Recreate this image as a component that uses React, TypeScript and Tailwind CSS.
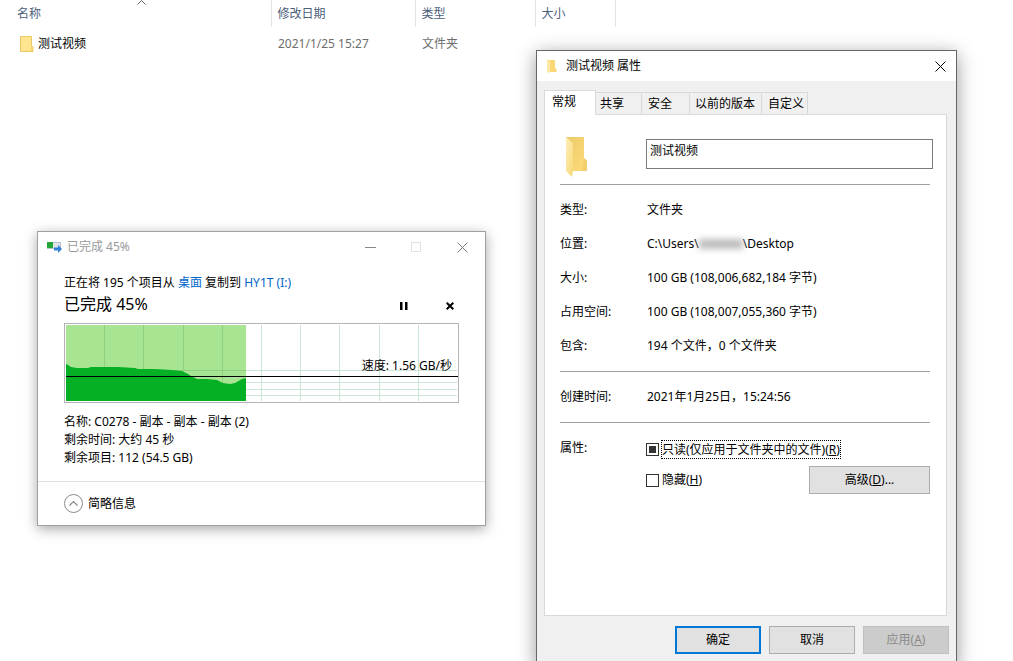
import { useEffect, useRef } from 'react';

const columns = ['修改日期', '类型', '大小'];

const sizeRows = [
  { label: '大小:', value: '100 GB (108,006,682,184 字节)' },
  { label: '占用空间:', value: '100 GB (108,007,055,360 字节)' },
  { label: '包含:', value: '194 个文件，0 个文件夹' },
];

function FileList() {
  return (
    <table className="w-full table-fixed border-collapse text-left">
      <colgroup>
        <col className="w-[271px]" />
        <col className="w-[144px]" />
        <col className="w-[120px]" />
        <col className="w-[80px]" />
        <col />
      </colgroup>
      <thead>
        <tr className="h-[27px] text-[#4c607a]">
          <th className="relative border-r border-[#e2e2e2] pl-[17px] font-normal">
            名称
            <svg className="absolute top-0 left-[137px]" width="9" height="6" viewBox="0 0 9 6" fill="none" stroke="#666">
              <path d="M0.5 4.5 L4.5 0.5 L8.5 4.5" />
            </svg>
          </th>
          {columns.map((name) => (
            <th key={name} className="border-r border-[#e2e2e2] pl-1.5 font-normal">
              {name}
            </th>
          ))}
          <th />
        </tr>
      </thead>
      <tbody>
        <tr className="h-[34px] text-[#6d6d6d]">
          <td className="pl-5">
            <div className="flex items-center gap-1 text-black">
              <svg width="14" height="16" viewBox="0 0 14 16">
                <path d="M0.5 0.5 H11.5 V10 L13 11 V15.5 H0.5 Z" fill="#ffe58f" stroke="#ecc95c" />
                <path d="M11 15 V10.5 L12.5 11.5 V15 Z" fill="#f7d367" />
              </svg>
              测试视频
            </div>
          </td>
          <td className="pl-[7px]">2021/1/25 15:27</td>
          <td className="pl-[7px]">文件夹</td>
          <td />
          <td />
        </tr>
      </tbody>
    </table>
  );
}

function SpeedChart() {
  return (
    <div className="relative h-20">
      <svg className="block h-full w-full" viewBox="0 0 395 80" preserveAspectRatio="none" shapeRendering="crispEdges">
        <rect x="0.5" y="0.5" width="394" height="79" fill="#fff" stroke="#b4b4b4" />
        <rect x="2" y="2" width="180" height="76" fill="#a8e592" />
        {/* Grid */}
        <path d="M40.5 2V78M79.5 2V78M119.5 2V78M158.5 2V78" stroke="#8fd07f" />
        <path d="M197.5 2V78M236.5 2V78M275.5 2V78M315.5 2V78M354.5 2V78" stroke="#cbe6d6" />
        <path d="M182 47.5H393M182 59.5H393M182 66.5H393M182 72.5H393" stroke="#cbe6d6" />
        <path d="M110 47.5H182" stroke="#8fd07f" />
        {/* Transfer speed */}
        <path
          d="M2 41 L4 42 L7 44 L13 45 L24 45 L27 44 L54 44 L71 45 L74 46 L91 46 L108 47 L118 48 L124 51 L127 53 L133 56 L143 56 L153 57 L159 60 L166 61 L171 60 L178 56 L182 55 V78 H2 Z"
          fill="#06b025"
          shapeRendering="auto"
        />
        <path d="M2 53.5H394" stroke="#000" />
      </svg>
      <span className="absolute right-[7px] bottom-7 leading-[18px]">速度: 1.56 GB/秒</span>
    </div>
  );
}

function CopyDialog() {
  return (
    <section className="absolute top-[231px] left-[37px] w-[449px] border border-[#a0a0a0] bg-white shadow-[0_3px_12px_rgba(0,0,0,0.35)]">
      <header className="flex h-[30px] items-center pl-[9px] text-[#999]">
        <svg className="mr-[5px]" width="15" height="12" viewBox="0 0 15 12">
          <rect x="0.5" y="1.5" width="13" height="6" fill="#dfe4e8" stroke="#b9c2ca" />
          <rect x="0" y="1" width="6" height="6" fill="#23a53a" />
          <path d="M7 6.5H11V4L15 8L11 12V9.5H7Z" fill="#3182d4" />
        </svg>
        <span className="flex-1">已完成 45%</span>
        <button aria-label="最小化" className="flex w-[46px] justify-center">
          <svg width="11" height="11" stroke="#888"><path d="M0 5.5H11" /></svg>
        </button>
        <button aria-label="最大化" disabled className="flex w-[46px] justify-center">
          <svg width="11" height="11" fill="none" stroke="#e0e0e0"><rect x="0.5" y="0.5" width="9" height="9" /></svg>
        </button>
        <button aria-label="关闭" className="flex w-[46px] justify-center">
          <svg width="11" height="11" stroke="#777"><path d="M0.5 0.5L10.5 10.5M10.5 0.5L0.5 10.5" /></svg>
        </button>
      </header>

      <div className="px-[26px] pt-3 pb-3.5 leading-[18px]">
        <p>
          正在将 195 个项目从 <a href="#desktop" className="text-[#0066cc]">桌面</a> 复制到{' '}
          <a href="#drive" className="text-[#0066cc]">HY1T (I:)</a>
        </p>
        <div className="mb-[7px] flex items-center">
          <h2 className="flex-1 text-base leading-6">已完成 45%</h2>
          <div className="flex gap-7 pt-1">
            <button aria-label="暂停" className="flex w-[18px] justify-center">
              <svg width="8" height="8"><path d="M0 0H2.5V8H0ZM5 0H7.5V8H5Z" /></svg>
            </button>
            <button aria-label="取消" className="flex w-[18px] justify-center">
              <svg width="8" height="8" stroke="#000" strokeWidth="2"><path d="M0.7 0.7L7.3 7.3M7.3 0.7L0.7 7.3" /></svg>
            </button>
          </div>
        </div>
        <SpeedChart />
        <div className="pt-2.5">
          <p>名称: C0278 - 副本 - 副本 - 副本 (2)</p>
          <p>剩余时间: 大约 45 秒</p>
          <p>剩余项目: 112 (54.5 GB)</p>
        </div>
      </div>

      <footer className="border-t border-[#dfdfdf] px-[26px] py-3">
        <button className="flex items-center gap-[5px]">
          <svg width="19" height="19" viewBox="0 0 19 19" fill="none" stroke="#8a8a8a">
            <circle cx="9.5" cy="9.5" r="9" />
            <path d="M5.5 11.5L9.5 7.5L13.5 11.5" strokeWidth="1.2" />
          </svg>
          简略信息
        </button>
      </footer>
    </section>
  );
}

function Row({ label, children }: { label: string; children: React.ReactNode }) {
  return (
    <div className="flex h-[34px] items-center">
      <dt className="w-[87px]">{label}</dt>
      <dd>{children}</dd>
    </div>
  );
}

function PropertiesDialog() {
  const readOnly = useRef<HTMLInputElement>(null);

  useEffect(() => {
    if (readOnly.current) readOnly.current.indeterminate = true;
  }, []);

  return (
    <section className="absolute top-[50px] left-[536px] w-[421px] border border-[#666] bg-[#f0f0f0] shadow-[0_4px_18px_rgba(0,0,0,0.4)]">
      <header className="flex h-[30px] items-center bg-white pr-2.5 pl-2.5">
        <svg className="mr-[9px]" width="10" height="13" viewBox="0 0 10 13">
          <path d="M0 0H8V8L9.5 9V12H0Z" fill="#f9d875" />
          <path d="M0 0L3 2V13L0 12Z" fill="#ffe9a6" />
        </svg>
        <span className="flex-1">测试视频 属性</span>
        <button aria-label="关闭">
          <svg width="11" height="11" stroke="#000"><path d="M0.5 0.5L10.5 10.5M10.5 0.5L0.5 10.5" /></svg>
        </button>
      </header>

      <div className="pt-[9px] pr-[9px] pl-[7px]">
        {/* Tabs */}
        <div role="tablist" className="flex items-end text-left">
          <button role="tab" aria-selected="true" className="relative z-10 -mb-px h-[25px] w-[52px] border border-b-0 border-[#d9d9d9] bg-white px-[7px] pb-[3px] text-left">常规</button>
          <button role="tab" className="h-[22px] w-[46px] border-t border-r border-[#d9d9d9] px-1 text-left">共享</button>
          <button role="tab" className="h-[22px] w-[48px] border-t border-r border-[#d9d9d9] px-1.5 text-left">安全</button>
          <button role="tab" className="h-[22px] w-[72px] border-t border-r border-[#d9d9d9] px-[5px] text-left whitespace-nowrap">以前的版本</button>
          <button role="tab" className="h-[22px] w-[46px] border-t border-r border-[#d9d9d9] pl-1.5 text-left whitespace-nowrap">自定义</button>
        </div>

        <div role="tabpanel" className="border border-[#d9d9d9] bg-white pt-[22px] pr-[13px] pb-[121px] pl-[15px]">
          <div className="flex items-start justify-between pb-[7px] pl-1.5">
            <svg width="22" height="40" viewBox="0 0 22 40">
              <defs>
                <linearGradient id="folderBack" x1="0" y1="0" x2="1" y2="1">
                  <stop offset="0" stopColor="#edca68" />
                  <stop offset="1" stopColor="#ffdc7c" />
                </linearGradient>
                <linearGradient id="folderFront" x1="0" y1="0" x2="1" y2="1">
                  <stop offset="0" stopColor="#ffeeb8" />
                  <stop offset="1" stopColor="#f7d876" />
                </linearGradient>
              </defs>
              <path d="M0 0H18V21L21 24V34H0Z" fill="url(#folderBack)" />
              <path d="M18 21L21 24V34H16Z" fill="#f5cf6c" />
              <path d="M0 0L7 6V34L6 40L0 34Z" fill="url(#folderFront)" />
            </svg>
            <input
              aria-label="文件夹名称"
              defaultValue="测试视频"
              className="mt-0.5 h-[30px] w-[287px] border border-[#7a7a7a] bg-white px-[3px] pb-2 outline-none"
            />
          </div>

          <div className="mr-[3px]">
            <dl className="border-t border-[#a0a0a0] py-2">
              <Row label="类型:">文件夹</Row>
              <Row label="位置:">
                <span className="flex items-center">
                  C:\Users\
                  <span className="h-2.5 w-11 bg-[#bdbdbd] blur-[3px]" />
                  \Desktop
                </span>
              </Row>
              {sizeRows.map((row) => (
                <Row key={row.label} label={row.label}>{row.value}</Row>
              ))}
            </dl>
            <dl className="border-t border-[#a0a0a0] py-2">
              <Row label="创建时间:">2021年1月25日，15:24:56</Row>
            </dl>
            <div className="flex border-t border-[#a0a0a0]">
              <div className="w-[86px] pt-[17px]">属性:</div>
              <div className="flex-1 pt-2.5">
                <div className="flex h-[33px] items-center gap-0.5">
                  <input
                    ref={readOnly}
                    id="readonly"
                    type="checkbox"
                    className="size-[13px] appearance-none border border-[#333] bg-clip-content p-0.5 indeterminate:bg-[#333]"
                  />
                  <label htmlFor="readonly" className="border border-dotted border-black leading-[17px] whitespace-nowrap">
                    只读(仅应用于文件夹中的文件)(<u>R</u>)
                  </label>
                </div>
                <div className="flex items-center gap-[3px]">
                  <input id="hidden" type="checkbox" className="size-[13px] appearance-none border border-[#333]" />
                  <label htmlFor="hidden" className="flex-1">
                    隐藏(<u>H</u>)
                  </label>
                  <button className="h-7 w-[121px] border border-[#adadad] bg-[#e1e1e1]">
                    高级(<u>D</u>)...
                  </button>
                </div>
              </div>
            </div>
          </div>
        </div>
      </div>

      <footer className="flex justify-end gap-2 pt-2.5 pr-[7px] pb-3">
        <button className="h-7 w-[86px] border-2 border-[#0078d7] bg-[#e1e1e1]">确定</button>
        <button className="h-7 w-[86px] border border-[#adadad] bg-[#e1e1e1]">取消</button>
        <button disabled className="h-7 w-[86px] border border-[#bfbfbf] bg-[#cccccc] text-[#8a8a8a]">
          应用(<u>A</u>)
        </button>
      </footer>
    </section>
  );
}

export default function App() {
  return (
    <main className="relative h-screen overflow-hidden bg-white font-['Noto_Sans','Noto_Sans_CJK_SC',sans-serif] text-xs text-black">
      <FileList />
      <CopyDialog />
      <PropertiesDialog />
    </main>
  );
}
